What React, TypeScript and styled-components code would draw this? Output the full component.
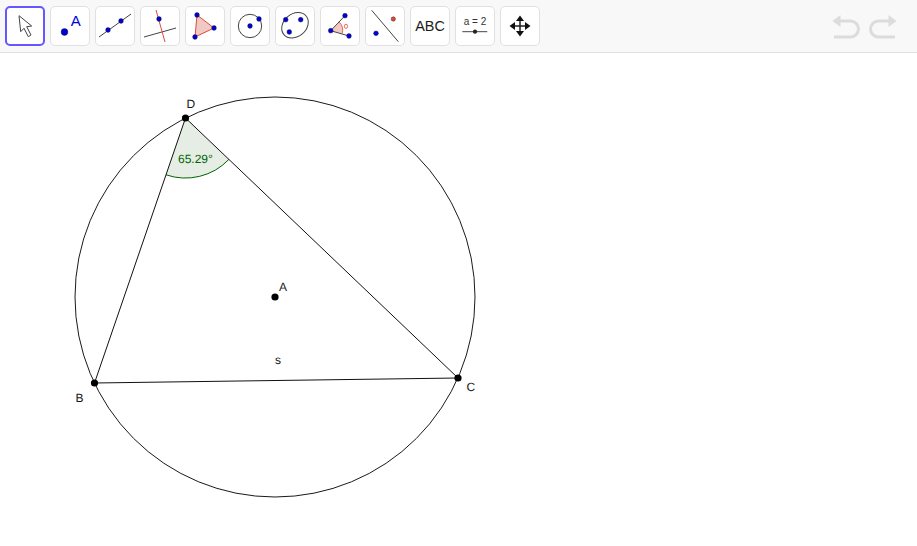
import styled, { createGlobalStyle } from "styled-components";
import { ReactNode } from "react";

const GlobalStyle = createGlobalStyle`
  html, body {
    margin: 0;
    padding: 0;
    background: #fff;
    font-family: "Liberation Sans", Arial, sans-serif;
    text-rendering: geometricPrecision;
  }
`;

const Page = styled.div`
  width: 917px;
  height: 546px;
  display: flex;
  flex-direction: column;
  overflow: hidden;
`;

const Toolbar = styled.div`
  height: 52px;
  flex: none;
  box-sizing: content-box;
  display: flex;
  align-items: flex-start;
  gap: 5px;
  padding: 0 20px 0 5px;
  background: #f8f8f8;
  border-bottom: 1px solid #e1e1e1;
`;

const ToolButton = styled.button<{ $selected?: boolean }>`
  width: 40px;
  height: 40px;
  margin-top: 6px;
  padding: 0;
  flex: none;
  background: #fff;
  border: ${(p) => (p.$selected ? "2px solid #6557ff" : "1px solid #e1e1e1")};
  border-radius: 5px;
  box-sizing: border-box;
  position: relative;
  display: flex;
  align-items: center;
  justify-content: center;
`;

const IconSvg = styled.svg`
  width: 40px;
  height: 40px;
  flex: none;
  display: block;
`;

const AbcLabel = styled.span`
  font-size: 14.4px;
  color: #1a1a1a;
`;

const History = styled.div`
  margin-left: auto;
  display: flex;
  gap: 9px;
  margin-top: 15px;
`;

const HistoryIcon = styled.svg<{ $flip?: boolean }>`
  width: 28px;
  height: 24px;
  display: block;
  transform: ${(p) => (p.$flip ? "scaleX(-1)" : "none")};
`;

const Board = styled.svg`
  width: 917px;
  height: 493px;
  display: block;
  flex: none;
`;

const Label = styled.text`
  font-family: "Liberation Sans", Arial, sans-serif;
  font-size: 12px;
  fill: #1a1a1a;
`;

const AngleLabel = styled(Label)`
  fill: #006400;
`;

const BLUE = "#0000d8";
const RED = "#e0483c";
const LINE = "#444";

function Dot({ x, y, r = 2.4, fill = BLUE }: { x: number; y: number; r?: number; fill?: string }) {
  return <circle cx={x} cy={y} r={r} fill={fill} stroke="#222" strokeWidth={0.4} />;
}

function Icon({ children }: { children: ReactNode }) {
  return <IconSvg viewBox="0 0 40 40">{children}</IconSvg>;
}

function Arrow() {
  return (
    <IconSvg viewBox="-2 -2 40 40">
      <path
        d="M12 7.7 L13.7 23.7 L17 20.3 L21.3 28.7 L24 27 L19.7 18.7 L24.7 18 Z"
        fill="#fff"
        stroke="#444"
        strokeWidth={1}
        strokeLinejoin="round"
      />
    </IconSvg>
  );
}

const tools: ReactNode[] = [
  <Icon key="point">
    <circle cx={14.5} cy={26} r={3.4} fill={BLUE} stroke="#111" strokeWidth={0.4} />
    <text x={20.7} y={19.7} fontSize={15} fontFamily="Liberation Sans" fill={BLUE}>
      A
    </text>
  </Icon>,
  <Icon key="line">
    <line x1={4} y1={31} x2={36} y2={8} stroke={LINE} strokeWidth={1} />
    <Dot x={13} y={24} />
    <Dot x={26} y={15} />
  </Icon>,
  <Icon key="perp">
    <line x1={4} y1={31} x2={36} y2={22} stroke={LINE} strokeWidth={1} />
    <line x1={16} y1={4} x2={25} y2={36} stroke={RED} strokeWidth={1} />
    <Dot x={19} y={13} />
  </Icon>,
  <Icon key="polygon">
    <polygon points="12,9 29,22 10,31" fill="#f1c9c4" stroke={RED} strokeWidth={1} />
    <Dot x={12} y={9} />
    <Dot x={29} y={22} />
    <Dot x={10} y={31} />
  </Icon>,
  <Icon key="circle">
    <circle cx={20} cy={20} r={11.7} fill="none" stroke={LINE} strokeWidth={1} />
    <Dot x={20} y={20} />
    <Dot x={29} y={13} />
  </Icon>,
  <Icon key="conic">
    <ellipse cx={20} cy={19.3} rx={14.5} ry={11.3} fill="none" stroke={LINE} strokeWidth={1} transform="rotate(-40 20 19.3)" />
    <Dot x={10.7} y={13.7} />
    <Dot x={25.7} y={13.7} />
    <Dot x={14.3} y={26} />
  </Icon>,
  <Icon key="angle">
    <path d="M10.7 24.7 L19 15.8 A12 12 0 0 1 22.3 27.4 Z" fill="#f3c9c4" />
    <path d="M19 15.8 A12 12 0 0 1 22.3 27.4" fill="none" stroke={RED} strokeWidth={0.8} />
    <line x1={10.7} y1={24.7} x2={25} y2={9.7} stroke={LINE} strokeWidth={1} />
    <line x1={10.7} y1={24.7} x2={29} y2={30} stroke={LINE} strokeWidth={1} />
    <ellipse cx={26} cy={20.3} rx={1.6} ry={2.1} fill="none" stroke={RED} strokeWidth={0.8} />
    <Dot x={10.7} y={24.7} />
    <Dot x={25} y={9.7} />
    <Dot x={29} y={30} />
  </Icon>,
  <Icon key="reflect">
    <line x1={6.7} y1={4.3} x2={33.3} y2={35.7} stroke={LINE} strokeWidth={1} />
    <Dot x={11} y={27.3} />
    <Dot x={28.3} y={13} r={2.2} fill={RED} />
  </Icon>,
  <AbcLabel key="abc">ABC</AbcLabel>,
  <Icon key="slider">
    <text x={20} y={18.7} fontSize={10} fontFamily="Liberation Sans" fill="#333" textAnchor="middle">
      a = 2
    </text>
    <line x1={7.3} y1={25.7} x2={32.3} y2={25.7} stroke={LINE} strokeWidth={1} />
    <circle cx={20} cy={25.7} r={2.1} fill="#222" />
  </Icon>,
  <Icon key="move">
    <path d="M20 11 V29 M11 20 H29" stroke="#222" strokeWidth={1.5} />
    <path d="M20 9.5 L24 15 H16 Z M20 30.5 L24 25 H16 Z M9.5 20 L15 16 V24 Z M30.5 20 L25 16 V24 Z" fill="#111" />
  </Icon>,
];

function Undo({ flip }: { flip?: boolean }) {
  return (
    <HistoryIcon viewBox="0 0 28 24" $flip={flip}>
      <path d="M0.3 6 L8.5 0 V12 Z" fill="#dcdcdc" />
      <path d="M8 6 H18.5 A8 8 0 0 1 18.5 22 H2" fill="none" stroke="#dcdcdc" strokeWidth={3} />
    </HistoryIcon>
  );
}

export default function App() {
  return (
    <Page>
      <GlobalStyle />
      <Toolbar>
        <ToolButton $selected>
          <Arrow />
        </ToolButton>
        {tools.map((tool, i) => (
          <ToolButton key={i}>{tool}</ToolButton>
        ))}
        <History>
          <Undo />
          <Undo flip />
        </History>
      </Toolbar>
      <Board viewBox="0 53 917 493">
        <path d="M185.5 118 L166 174.8 A60 60 0 0 0 228.9 159.4 Z" fill="#e5ede5" />
        <path d="M166 174.8 A60 60 0 0 0 228.9 159.4" fill="none" stroke="#006400" strokeWidth={1} />
        <circle cx={275} cy={297} r={200} fill="none" stroke="#1a1a1a" strokeWidth={1} />
        <g stroke="#111" strokeWidth={1} fill="none">
          <line x1={185.5} y1={118} x2={94.5} y2={383} />
          <line x1={94.5} y1={383} x2={458} y2={378} />
          <line x1={458} y1={378} x2={185.5} y2={118} />
        </g>
        <g fill="#000">
          <circle cx={185.5} cy={118} r={3.6} />
          <circle cx={94.5} cy={383} r={3.6} />
          <circle cx={458} cy={378} r={3.6} />
          <circle cx={275} cy={297} r={3.6} />
        </g>
        <Label x={186.5} y={107.5}>D</Label>
        <Label x={279} y={291}>A</Label>
        <Label x={275} y={364}>s</Label>
        <Label x={466.5} y={391}>C</Label>
        <Label x={75.5} y={402}>B</Label>
        <AngleLabel x={178} y={163}>65.29°</AngleLabel>
      </Board>
    </Page>
  );
}
